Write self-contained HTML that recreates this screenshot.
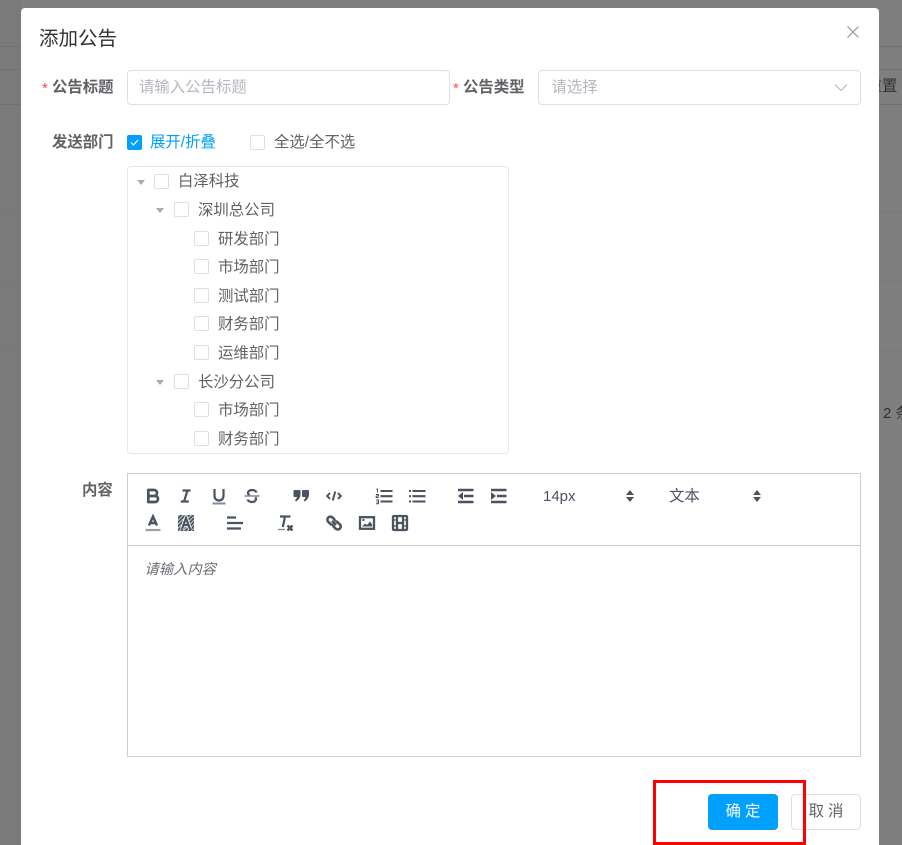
<!DOCTYPE html>
<html lang="zh">
<head>
<meta charset="utf-8">
<title>添加公告</title>
<style>
html,body{margin:0;padding:0;width:902px;height:845px;overflow:hidden;background:#7f7f7f;font-family:"Liberation Sans","Noto Sans CJK SC",sans-serif;}
.a{position:absolute;white-space:nowrap;}
.line{position:absolute;left:0;width:902px;height:1px;background:#717171;}
.faint{background:#787878;}
#dlg{position:absolute;left:21px;top:8px;width:858px;height:837px;background:#fff;border-radius:4px 4px 0 0;}
.lbl{font-size:15.4px;font-weight:700;color:#606266;line-height:22px;}
.star{font-size:15px;color:#ff4949;line-height:22px;font-weight:400;}
.inp{position:absolute;box-sizing:border-box;background:#fff;border:1px solid #dcdfe6;border-radius:4px;height:35px;}
.ph{font-size:15.4px;color:#b4b7bf;line-height:22px;}
.cb{position:absolute;box-sizing:border-box;width:15px;height:15px;background:#fff;border:1px solid #dcdfe6;border-radius:2px;}
.t{position:absolute;font-size:15.4px;color:#606266;line-height:22px;white-space:nowrap;}
.tri{position:absolute;width:0;height:0;border-left:4px solid transparent;border-right:4px solid transparent;border-top:5px solid #a8abb2;}
svg.ic{position:absolute;width:18px;height:18px;fill:none;stroke:#4a5362;stroke-width:2;}
.fill{fill:#4a5362;stroke:none;}
</style>
</head>
<body>
<div class="a" style="left:0;top:0;width:21px;height:845px;background:#7a7a7a;"></div>
<div class="line" style="top:46px"></div>
<div class="line" style="top:69px"></div>
<div class="line" style="top:104px"></div>
<div class="line faint" style="top:211px"></div>
<div class="line faint" style="top:281px"></div>
<div class="line faint" style="top:350px"></div>
<div class="a" style="left:879px;top:77px;width:23px;overflow:hidden;font-size:15.4px;line-height:20px;color:#303030;"><span style="display:inline-block;margin-left:-12.4px">重置</span></div>
<div class="a" style="left:883px;top:404px;width:19px;overflow:hidden;font-size:15px;line-height:20px;color:#303030;">2 条</div>

<div id="dlg"></div>

<div class="a" style="left:39px;top:25px;font-size:19.5px;line-height:28px;color:#303133;">添加公告</div>
<svg class="a" style="left:847px;top:26px;width:12px;height:12px" viewBox="0 0 12 12"><path d="M.5.5l11 11M11.500.5l-11 11" stroke="#909399" stroke-width="1.100" fill="none"/></svg>

<div class="a star" style="left:42px;top:78px;">*</div>
<div class="a lbl" style="left:52px;top:77px;">公告标题</div>
<div class="inp" style="left:127px;top:70px;width:323px;"></div>
<div class="a ph" style="left:139px;top:77px;">请输入公告标题</div>

<div class="a star" style="left:453px;top:78px;">*</div>
<div class="a lbl" style="left:463px;top:77px;">公告类型</div>
<div class="inp" style="left:538px;top:70px;width:323px;"></div>
<div class="a ph" style="left:551.500px;top:77px;">请选择</div>
<svg class="a" style="left:834px;top:83px;width:14px;height:9px" viewBox="0 0 14 9"><path d="M1 1.500l6 6 6-6" stroke="#b4b7bf" stroke-width="1.100" fill="none"/></svg>

<div class="a lbl" style="left:52px;top:132px;">发送部门</div>
<div class="cb" style="left:127px;top:135px;background:#00a0ff;border-color:#00a0ff;"></div>
<svg class="a" style="left:127px;top:135px;width:15px;height:15px" viewBox="0 0 15 15"><path d="M4 7.500l2.500 2.500 4.500-5" stroke="#fff" stroke-width="1.200" fill="none"/></svg>
<div class="t" style="left:150px;top:132px;color:#00a0ff;">展开/折叠</div>
<div class="cb" style="left:250px;top:135px;"></div>
<div class="t" style="left:274px;top:132px;">全选/全不选</div>

<div class="a" style="left:127px;top:166px;width:382px;height:288px;box-sizing:border-box;border:1px solid #e4e7ed;border-radius:4px;"></div>

<div class="tri" style="left:137px;top:180px"></div>
<div class="cb" style="left:154px;top:174px"></div>
<div class="t" style="left:178px;top:170.500px">白泽科技</div>

<div class="tri" style="left:156px;top:208px"></div>
<div class="cb" style="left:174px;top:202px"></div>
<div class="t" style="left:198px;top:200px">深圳总公司</div>

<div class="cb" style="left:194px;top:231px"></div>
<div class="t" style="left:218px;top:229px">研发部门</div>
<div class="cb" style="left:194px;top:259px"></div>
<div class="t" style="left:218px;top:257px">市场部门</div>
<div class="cb" style="left:194px;top:288px"></div>
<div class="t" style="left:218px;top:286px">测试部门</div>
<div class="cb" style="left:194px;top:316px"></div>
<div class="t" style="left:218px;top:314px">财务部门</div>
<div class="cb" style="left:194px;top:345px"></div>
<div class="t" style="left:218px;top:343px">运维部门</div>

<div class="tri" style="left:156px;top:380px"></div>
<div class="cb" style="left:174px;top:374px"></div>
<div class="t" style="left:198px;top:372px">长沙分公司</div>
<div class="cb" style="left:194px;top:402px"></div>
<div class="t" style="left:218px;top:400px">市场部门</div>
<div class="cb" style="left:194px;top:431px"></div>
<div class="t" style="left:218px;top:429px">财务部门</div>

<div class="a lbl" style="left:82px;top:480px;">内容</div>
<div class="a" style="left:127px;top:473px;width:734px;height:284px;box-sizing:border-box;border:1px solid #ccced1;"></div>
<div class="a" style="left:128px;top:545px;width:732px;height:1px;background:#ccced1;"></div>

<!-- Bold -->
<svg class="ic" style="left:144px;top:487px" viewBox="0 0 18 18"><path d="M4.300 3h5.700a3 3 0 0 1 0 6H4.300zM4.300 9h6.700a3 3 0 0 1 0 6H4.300z" stroke-width="2.700" stroke-linejoin="round"/></svg>
<!-- Italic -->
<svg class="ic" style="left:177px;top:487px" viewBox="0 0 18 18"><path d="M5.500 3.500h8M3.800 14.500h8M10.500 3.500L7 14.500" stroke-width="2.200"/></svg>
<!-- Underline -->
<svg class="ic" style="left:210px;top:487px" viewBox="0 0 18 18"><path d="M4.500 2v7a4.500 4.500 0 0 0 9 0V2" stroke-width="2.200"/><path d="M2.500 16.500h13" stroke="#858c98"/></svg>
<!-- Strike -->
<svg class="ic" style="left:243px;top:487px" viewBox="0 0 18 18"><path d="M13.500 5.500C13 4 11 3 9 3 6.500 3 5 4.300 5 6c0 1 .5 2 2 2.500M4.500 12.500C5 14 7 15 9 15c2.500 0 4-1.200 4-3 0-.7-.2-1.300-.7-1.800" stroke-width="2.200"/><path d="M1.500 9h15" stroke="#858c98" stroke-width="1.600"/></svg>
<!-- Quote -->
<svg class="ic" style="left:292px;top:487px" viewBox="0 0 18 18"><path class="fill" d="M2.500 3h5c.6 0 1 .4 1 1v3.500c0 3-1.800 5.500-4.500 7l-1-1.200c1-.8 1.700-2 1.900-3.300H2.500c-.6 0-1-.4-1-1V4c0-.6.4-1 1-1zM11 3h5c.6 0 1 .4 1 1v3.500c0 3-1.800 5.500-4.500 7l-1-1.200c1-.8 1.700-2 1.900-3.300H11c-.6 0-1-.4-1-1V4c0-.6.4-1 1-1z"/></svg>
<!-- Code -->
<svg class="ic" style="left:325px;top:487px" viewBox="0 0 18 18"><path d="M5 6L2.200 9 5 12M13 6l2.800 3L13 12M10.300 4.500l-2.600 9" stroke-width="2"/></svg>
<!-- OL -->
<svg class="ic" style="left:375px;top:487px" viewBox="0 0 18 18"><path d="M5.500 4h12M5.500 9.200h12M5.500 14.500h12" stroke-width="2.100"/><path d="M1.500 2.500l1-.5v3.500M1 7.500h2.500v1.500H1.200v1.500h2.500M1 13h2.500v3.800H1M1.500 15h2" stroke-width="1"/></svg>
<!-- UL -->
<svg class="ic" style="left:408px;top:487px" viewBox="0 0 18 18"><path d="M4.500 4h13M4.500 9.200h13M4.500 14.500h13" stroke-width="2.100"/><path d="M1 4h2M1 9.200h2M1 14.500h2" stroke-width="2.100"/></svg>
<!-- Outdent -->
<svg class="ic" style="left:457px;top:487px" viewBox="0 0 18 18"><path d="M1 3h15.500M1 15h15.500M7 9h9.500" stroke-width="2.400"/><path class="fill" d="M6 5v8L1 9z"/></svg>
<!-- Indent -->
<svg class="ic" style="left:490px;top:487px" viewBox="0 0 18 18"><path d="M1 3h15.500M1 15h15.500M7 9h9.500" stroke-width="2.400"/><path class="fill" d="M1 5v8L6 9z"/></svg>

<div class="a" style="left:543px;top:486.500px;font-size:15px;line-height:20px;color:#4a5362;">14px</div>
<svg class="a" style="left:626px;top:490px;width:8px;height:12px" viewBox="0 0 8 12"><path class="fill" d="M4 0l4 5H0zM4 12L0 7h8z"/></svg>
<div class="a" style="left:669px;top:487px;font-size:15.4px;line-height:20px;color:#4a5362;">文本</div>
<svg class="a" style="left:753px;top:490px;width:8px;height:12px" viewBox="0 0 8 12"><path class="fill" d="M4 0l4 5H0zM4 12L0 7h8z"/></svg>

<!-- Font color -->
<svg class="ic" style="left:144px;top:514px" viewBox="0 0 18 18"><path d="M5 11.500L9 2.500l4 9M6.300 9h5.400" stroke-width="2.400"/><path d="M1.500 16h15" stroke="#9aa0aa" stroke-width="2.200"/></svg>
<!-- Bg color -->
<svg class="ic" style="left:177px;top:514px" viewBox="0 0 18 18"><defs><pattern id="h" width="2.800" height="2.800" patternUnits="userSpaceOnUse" patternTransform="rotate(45)"><rect width="1.100" height="2.800" fill="#7d8490"/></pattern></defs><rect x="1" y="1" width="16" height="16" fill="url(#h)" stroke="none"/><path d="M5 15L9 4l4 11M6.300 11h5.400" stroke="#fff" stroke-width="4"/><path d="M5 15L9 4l4 11M6.300 11h5.400" stroke-width="2.200"/></svg>
<!-- Align -->
<svg class="ic" style="left:226px;top:514px" viewBox="0 0 18 18"><path d="M1 3.500h9M1 9h16M1 14.500h14" stroke-width="2.200"/></svg>
<!-- Clear -->
<svg class="ic" style="left:276px;top:514px" viewBox="0 0 18 18"><path d="M4 2.500h10.500M9 2.500L6.800 13" stroke-width="2.200"/><path d="M2 15.500h7" stroke="#858c98" stroke-width="1.400"/><path d="M11.500 11.500l5 5M16.500 11.500l-5 5" stroke-width="2.400"/></svg>
<!-- Link -->
<svg class="ic" style="left:325px;top:514px" viewBox="0 0 18 18"><path d="M8.500 10.500L7 12M6.500 11L3.300 7.800a3 3 0 0 1 4.200-4.300L10 6M7 7l4 4" stroke-width="2.600"/><path d="M9 6.800l1.500-1M11 7l3.800 3.300a3 3 0 0 1-4.200 4.300L8 12" stroke-width="2.600"/></svg>
<!-- Image -->
<svg class="ic" style="left:358px;top:514px" viewBox="0 0 18 18"><rect x="2" y="3.200" width="14" height="11.600" stroke-width="2.300"/><path class="fill" d="M4 12.500l3-3 2 1.500 3-3.500 2.200 3v2zM4.500 5h2v2h-2z"/></svg>
<!-- Video -->
<svg class="ic" style="left:391px;top:514px" viewBox="0 0 18 18"><rect x="2" y="2" width="14" height="14" rx="1" stroke-width="2.300"/><path d="M6 2v14M12 2v14M6 9h6" stroke-width="2.300"/><path d="M2 6h3M2 12h3M13 6h3M13 12h3" stroke-width="1.200"/></svg>

<div class="a" style="left:144.500px;top:560px;font-size:14.300px;line-height:20px;font-style:italic;color:#6a6d73;">请输入内容</div>

<div class="a" style="left:708px;top:794px;width:70px;height:36px;background:#00a0ff;border-radius:4px;color:#fff;font-size:15.400px;line-height:36px;text-align:center;letter-spacing:4px;text-indent:4px;">确定</div>
<div class="a" style="left:791px;top:794px;width:70px;height:36px;box-sizing:border-box;background:#fff;border:1px solid #dcdfe6;border-radius:4px;color:#606266;font-size:15.400px;line-height:34px;text-align:center;letter-spacing:4px;text-indent:4px;">取消</div>

<div class="a" style="left:653px;top:780px;width:153px;height:65px;box-sizing:border-box;border:3px solid #f00;"></div>
</body>
</html>
